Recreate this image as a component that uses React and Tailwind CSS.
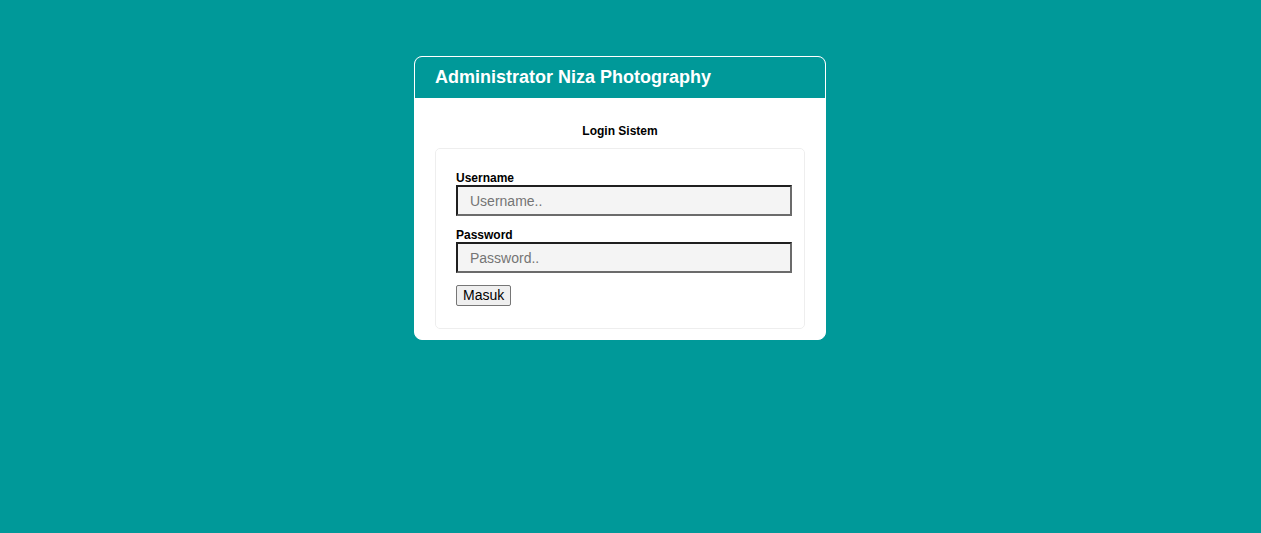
export default function App() {
  return (
    <div className="min-h-[533px] w-full bg-[#009999] pt-[56px] font-['Liberation_Sans',Arial,sans-serif]">
      <div className="ml-[414px] w-[412px] overflow-hidden rounded-[8px] border border-white bg-white">
        <div className="flex h-[41px] items-center bg-[#009999] pl-[20px]">
          <h1 className="text-[18px] font-bold text-white">Administrator Niza Photography</h1>
        </div>
        <div className="px-[20px] pb-[10px] pt-[26px]">
          <div className="text-center text-[12px] font-bold text-black leading-[14px]">Login Sistem</div>
          <div className="mt-[10px] rounded-[5px] border border-[#eeeeee] px-[20px] pb-[22px] pt-[22px]">
            <label className="block text-[12px] font-bold leading-[14px] text-black">Username</label>
            <input
              type="text"
              placeholder="Username.."
              className="block h-[31px] w-[336px] border-2 border-t-[#1f1f1f] border-l-[#1f1f1f] border-b-[#6b6b6b] border-r-[#6b6b6b] bg-[#f4f4f4] px-[12px] text-[14px] text-black placeholder:text-[#757575] outline-none"
            />
            <label className="mt-[12px] block text-[12px] font-bold leading-[14px] text-black">Password</label>
            <input
              type="password"
              placeholder="Password.."
              className="block h-[31px] w-[336px] border-2 border-t-[#1f1f1f] border-l-[#1f1f1f] border-b-[#6b6b6b] border-r-[#6b6b6b] bg-[#f4f4f4] px-[12px] text-[14px] text-black placeholder:text-[#757575] outline-none"
            />
            <button className="mt-[12px] block h-[21px] rounded-[2px] border border-[#767676] bg-[#efefef] px-[6px] text-[14px] leading-[17px] text-black">
              Masuk
            </button>
          </div>
        </div>
      </div>
    </div>
  );
}
